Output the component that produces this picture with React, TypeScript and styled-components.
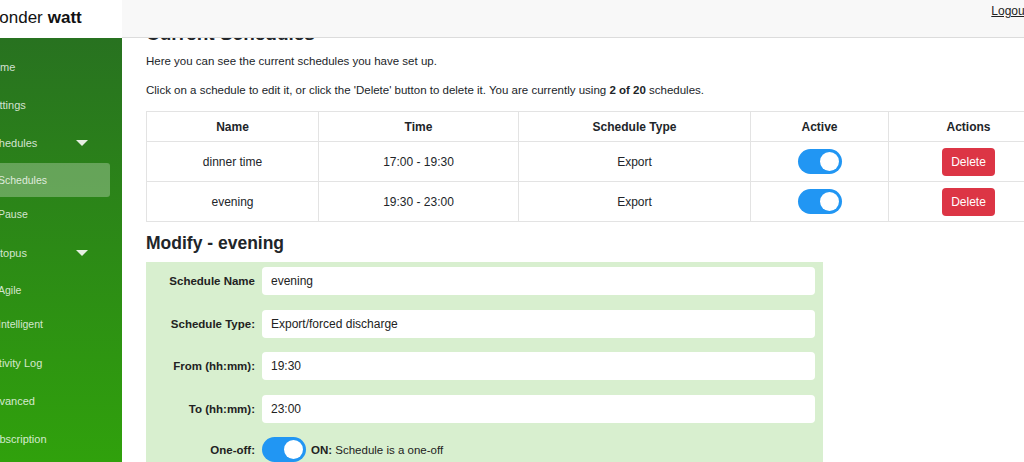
import React from "react";
import styled, { createGlobalStyle } from "styled-components";

// page is shown scrolled: 32px to the right and part-way down

const GlobalStyle = createGlobalStyle`
  html, body {
    margin: 0;
    padding: 0;
    overflow: hidden;
    background: #fff;
  }
  body {
    font-family: "Liberation Sans", Arial, sans-serif;
    color: #212529;
  }
  * {
    box-sizing: border-box;
  }
`;

type Schedule = {
  name: string;
  time: string;
  type: string;
  active: boolean;
};

const schedules: Schedule[] = [
  { name: "dinner time", time: "17:00 - 19:30", type: "Export", active: true },
  { name: "evening", time: "19:30 - 23:00", type: "Export", active: true },
];

type NavEntry = {
  label: string;
  children?: { label: string; selected?: boolean }[];
};

const nav: NavEntry[] = [
  { label: "Home" },
  { label: "Settings" },
  {
    label: "Schedules",
    children: [{ label: "Schedules", selected: true }, { label: "Pause" }],
  },
  {
    label: "Octopus",
    children: [{ label: "Agile" }, { label: "Intelligent" }],
  },
  { label: "Activity Log" },
  { label: "Advanced" },
  { label: "Subscription" },
];

export default function App() {
  return (
    <>
      <GlobalStyle />
      <Page>
        <LogoCell>
          <LogoLight>wonder</LogoLight>
          <LogoBold>watt</LogoBold>
        </LogoCell>
        <TopBar>
          <LogoutLink href="#">Logout</LogoutLink>
        </TopBar>

        <Sidebar>
          {nav.map((item) => (
            <React.Fragment key={item.label}>
              <NavItem>
                <span>{item.label}</span>
                {item.children && <Caret />}
              </NavItem>
              {item.children && (
                <SubList>
                  {item.children.map((child) => (
                    <SubItem key={child.label} $selected={child.selected}>
                      {child.label}
                    </SubItem>
                  ))}
                </SubList>
              )}
            </React.Fragment>
          ))}
        </Sidebar>

        <Main>
          <Content>
            <PageTitle>Current Schedules</PageTitle>
            <Text>Here you can see the current schedules you have set up.</Text>
            <Text>
              Click on a schedule to edit it, or click the 'Delete' button to
              delete it. You are currently using <b>2 of 20</b> schedules.
            </Text>

            <Table>
              <colgroup>
                <col style={{ width: 172 }} />
                <col style={{ width: 200 }} />
                <col style={{ width: 232 }} />
                <col style={{ width: 138 }} />
                <col style={{ width: 160 }} />
              </colgroup>
              <thead>
                <tr>
                  <Th>Name</Th>
                  <Th>Time</Th>
                  <Th>Schedule Type</Th>
                  <Th>Active</Th>
                  <Th>Actions</Th>
                </tr>
              </thead>
              <tbody>
                {schedules.map((s) => (
                  <tr key={s.name}>
                    <Td>{s.name}</Td>
                    <Td>{s.time}</Td>
                    <Td>{s.type}</Td>
                    <Td>
                      <Toggle $on={s.active} />
                    </Td>
                    <Td>
                      <DeleteButton>Delete</DeleteButton>
                    </Td>
                  </tr>
                ))}
              </tbody>
            </Table>

            <SectionTitle>Modify - evening</SectionTitle>
            <FormBox>
              <Label>Schedule Name</Label>
              <Input defaultValue="evening" />
              <Label>Schedule Type:</Label>
              <Input defaultValue="Export/forced discharge" />
              <Label>From (hh:mm):</Label>
              <Input defaultValue="19:30" />
              <Label>To (hh:mm):</Label>
              <Input defaultValue="23:00" />
              <Label>One-off:</Label>
              <SwitchRow>
                <Toggle $on />
                <span>
                  <b>ON:</b> Schedule is a one-off
                </span>
              </SwitchRow>
            </FormBox>
          </Content>
        </Main>
      </Page>
    </>
  );
}

const Page = styled.div`
  display: grid;
  grid-template-columns: 154px 1fr;
  grid-template-rows: 38px 1fr;
  width: 1100px;
  height: 462px;
  margin-left: -32px;
`;

const LogoCell = styled.div`
  display: flex;
  align-items: center;
  gap: 5px;
  padding: 0 0 3px 19px;
  background: #fff;
  font-size: 17px;
  color: #111;
`;

const LogoLight = styled.span`
  font-weight: 400;
`;

const LogoBold = styled.span`
  font-weight: 700;
`;

const TopBar = styled.header`
  display: flex;
  justify-content: flex-end;
  align-items: flex-start;
  padding: 4px 40px 0 0;
  background: #f8f8f8;
  border-bottom: 1px solid #dcdcdc;
`;

const LogoutLink = styled.a`
  font-size: 12px;
  color: #222;
  text-decoration: underline;
`;

const Sidebar = styled.nav`
  display: flex;
  flex-direction: column;
  padding-top: 10px;
  background: linear-gradient(180deg, #287220 0%, #2c8a16 50%, #30a10c 100%);
  overflow: hidden;
`;

const NavItem = styled.div`
  display: flex;
  align-items: center;
  justify-content: space-between;
  height: 38px;
  padding: 0 34px 0 18px;
  font-size: 11px;
  color: rgba(255, 255, 255, 0.8);
`;

const Caret = styled.span`
  width: 0;
  height: 0;
  border-left: 6px solid transparent;
  border-right: 6px solid transparent;
  border-top: 6px solid #e6efe2;
`;

const SubList = styled.div`
  display: flex;
  flex-direction: column;
  margin-top: 1px;
  margin-bottom: 3px;
`;

const SubItem = styled.div<{ $selected?: boolean }>`
  display: flex;
  align-items: center;
  height: 34px;
  margin: 0 12px 0 20px;
  padding-left: 10px;
  border-radius: 3px;
  font-size: 10.5px;
  color: rgba(255, 255, 255, 0.8);
  background: ${(p) => (p.$selected ? "rgba(255, 255, 255, 0.28)" : "transparent")};
`;

const Main = styled.main`
  overflow: hidden;
  padding: 0 20px 0 24px;
`;

const Content = styled.div`
  margin-top: -16px;
`;

const PageTitle = styled.h2`
  margin: 0 0 8px;
  font-size: 19px;
  line-height: 23px;
  font-weight: 700;
`;

const Text = styled.p`
  margin: 0 0 12px;
  font-size: 11.5px;
  line-height: 17px;
`;

const Table = styled.table`
  width: 902px;
  table-layout: fixed;
  border-collapse: collapse;
  margin-top: 3px;
  font-size: 12px;
`;

const Th = styled.th`
  height: 30px;
  padding: 0 8px;
  border: 1px solid #e3e3e3;
  font-weight: 700;
  text-align: center;
  vertical-align: middle;
`;

const Td = styled.td`
  height: 40px;
  padding: 0 8px;
  border: 1px solid #e3e3e3;
  text-align: center;
  vertical-align: middle;
`;

const Toggle = styled.span<{ $on?: boolean }>`
  position: relative;
  display: inline-block;
  width: 44px;
  height: 25px;
  border-radius: 13px;
  background: ${(p) => (p.$on ? "#2196f3" : "#ccc")};
  vertical-align: middle;

  &::after {
    content: "";
    position: absolute;
    top: 3px;
    left: ${(p) => (p.$on ? "22px" : "3px")};
    width: 19px;
    height: 19px;
    border-radius: 50%;
    background: #fff;
  }
`;

const DeleteButton = styled.button`
  width: 53px;
  height: 28px;
  border: none;
  border-radius: 4px;
  background: #dc3545;
  color: #fff;
  font-family: inherit;
  font-size: 12px;
`;

const SectionTitle = styled.h3`
  margin: 10px 0 8px;
  font-size: 17.5px;
  line-height: 22px;
  font-weight: 700;
`;

const FormBox = styled.div`
  display: grid;
  grid-template-columns: 109px 1fr;
  column-gap: 7px;
  row-gap: 14.5px;
  align-items: center;
  width: 677px;
  padding: 5px 8px 20px 0;
  background: #d8efcf;
`;

const Label = styled.label`
  font-size: 11.5px;
  font-weight: 700;
  text-align: right;
  color: #222;
`;

const Input = styled.input`
  height: 28px;
  padding: 0 9px;
  border: none;
  border-radius: 4px;
  background: #fff;
  font-family: inherit;
  font-size: 12px;
  color: #222;
  outline: none;
`;

const SwitchRow = styled.div`
  display: flex;
  align-items: center;
  gap: 5px;
  font-size: 11.5px;
  color: #222;
`;
